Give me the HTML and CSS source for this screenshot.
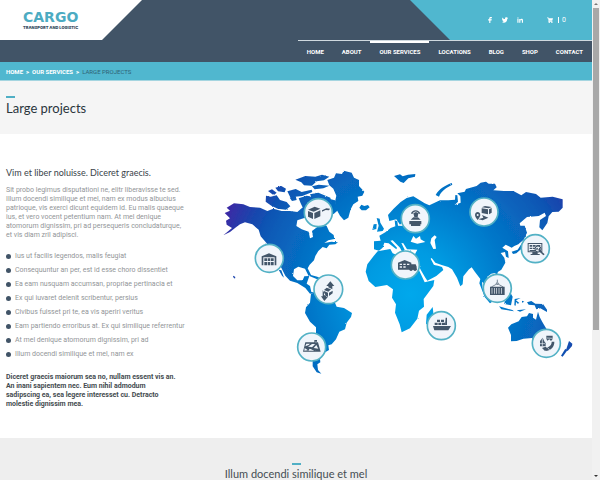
FILE: index.html
```html
<!DOCTYPE html>
<html lang="en">
<head>
<meta charset="utf-8">
<title>Large projects</title>
<link rel="stylesheet" href="styles.css">
</head>
<body>
<div class="page">
  <header class="header">
    <div class="topbar">
      <a class="logo" href="#"><span class="logo-name">CARGO</span><span class="logo-sub">TRANSPORT AND LOGISTIC</span></a>
      <div class="tools">
        <a href="#" aria-label="Facebook"><svg viewBox="0 0 16 16"><path d="M6 16V9H3V6h3V4c0-3 2-4 4-4h3v3h-2c-1 0-2 0-2 1v2h4l-1 3H9v7z"/></svg></a>
        <a href="#" aria-label="Twitter"><svg viewBox="0 0 16 16"><path d="M16 3l-2 2c0 6-4 10-9 10-2 0-4-1-5-2 2 0 4 0 5-1-2 0-3-1-3-2h1C1 9 0 8 0 6h2C0 5 0 3 1 1c2 3 4 4 7 4 0-5 4-5 6-3l2-1-1 2z"/></svg></a>
        <a href="#" aria-label="LinkedIn"><svg viewBox="0 0 16 16"><path d="M1 5h3v10H1zM1 1h3v3H1zM6 5h3v2c1-3 7-3 7 2v6h-3v-5c0-3-4-3-4 0v5H6z"/></svg></a>
        <a class="cart" href="#" aria-label="Cart"><svg viewBox="0 0 16 16"><path d="M0 1h4l1 2h11l-2 7H6v1h8v2H4V9L3 3H0z"/><circle cx="6" cy="14" r="2"/><circle cx="13" cy="14" r="2"/></svg><span class="count">0</span></a>
      </div>
    </div>
    <nav class="nav">
      <a href="#">HOME</a><a href="#">ABOUT</a><a class="active" href="#">OUR SERVICES</a><a href="#">LOCATIONS</a><a href="#">BLOG</a><a href="#">SHOP</a><a href="#">CONTACT</a>
    </nav>
  </header>
  <div class="crumbs"><a href="#">HOME</a><b>&gt;</b><a href="#">OUR SERVICES</a><b>&gt;</b><span>LARGE PROJECTS</span></div>
  <section class="title"><h1>Large projects</h1></section>
  <main class="main">
    <article class="copy">
      <h2>Vim et liber noluisse. Diceret graecis.</h2>
      <p>Sit probo legimus disputationi ne, elitr liberavisse te sed.<br>Illum docendi similique et mel, nam ex modus albucius<br>patrioque, vis exerci dicunt equidem id. Eu malis quaeque<br>ius, et vero vocent petentium nam. At mel denique<br>atomorum dignissim, pri ad persequeris concludaturque,<br>et vis diam zril adipisci.</p>
      <ul>
        <li>Ius ut facilis legendos, malis feugiat</li>
        <li>Consequuntur an per, est id esse choro dissentiet</li>
        <li>Ea eam nusquam accumsan, propriae pertinacia et</li>
        <li>Ex qui iuvaret delenit scribentur, persius</li>
        <li>Civibus fuisset pri te, ea vis aperiri veritus</li>
        <li>Eam partiendo erroribus at. Ex qui similique referrentur</li>
        <li>At mel denique atomorum dignissim, pri ad</li>
        <li>Illum docendi similique et mel, nam ex</li>
      </ul>
      <p class="strong">Diceret graecis maiorum sea no, nullam essent vis an.<br>An inani sapientem nec. Eum nihil admodum<br>sadipscing ea, sea legere interesset cu. Detracto<br>molestie dignissim mea.</p>
    </article>
    <svg class="map" viewBox="0 0 1110 660" role="img" aria-label="World map of services">
      <defs>
        <radialGradient id="sea" gradientUnits="userSpaceOnUse" cx="600" cy="400" r="600">
          <stop offset="0" stop-color="#00a8ec"/><stop offset=".22" stop-color="#009be2"/><stop offset=".5" stop-color="#0477c9"/><stop offset=".78" stop-color="#0a58b5"/><stop offset=".88" stop-color="#1a45ad"/><stop offset="1" stop-color="#3a2aa5"/>
        </radialGradient>
        <filter id="coast" x="-2%" y="-2%" width="104%" height="104%"><feTurbulence type="fractalNoise" baseFrequency=".2" numOctaves="2" seed="4"/><feDisplacementMap in="SourceGraphic" scale="5" xChannelSelector="R" yChannelSelector="G"/></filter>
      </defs>
      <g fill="url(#sea)" filter="url(#coast)">
        <path d="M44 156L60 149 50 140 72 127 100 130 120 138 150 140 172 150 190 143 215 150 240 150 262 153 275 142 290 132 330 150 285 170 262 178 259 195 275 205 296 212 300 232 309 228 306 210 322 198 338 188 350 195 358 212 371 222 373 234 355 238 343 246 364 242 384 244 376 250 358 251 350 262 338 258 325 270 316 285 312 298 299 311 293 322 303 342 296 345 285 323 265 317 252 325 249 345 262 358 278 358 283 346 298 345 292 362 290 368 300 375 304 393 320 395 300 398 286 381 262 366 240 359 226 344 214 320 204 302 185 275 170 247 152 226 146 206 127 190 105 184 90 190 78 199 60 213 40 223 66 201 50 191 48 179 60 172z"/>
        <path d="M206 326l10 18 6 6-8-22zM300 341l22 6 20 10-4 5-20-9-18-7z"/>
        <path d="M303 398L320 393 342 401 374 423 380 437 402 441 426 456 423 468 410 485 405 505 388 512 378 535 365 550 355 553 357 567 343 575 330 594 331 604 322 610 324 627 334 638 320 634 308 616 308 600 315 560 318 530 318 499 300 482 285 456 288 439 300 425z"/>
        <path d="M352 57L372 50 378 37 396 39 401 29 425 35 432 50 447 57 447 75 463 92 457 104 443 107 445 120 430 130 422 145 415 170 402 178 390 164 377 141 375 122 379 104 370 83 358 73z"/>
        <path d="M448 140l6-9 9 4 11-3 5 7-11 9h-13z"/>
        <path d="M256 56l30-11 30 2 20-6 22 6-16 11-22 3-14 13-24-1-8-9z"/>
        <path d="M196 80l18-5 14 8-4 11-20-3zM174 90l12-5 14 10-9 8zM168 104l14 3 18-4 10 14 20 6 11 13-13 10-25-3-19-9-17-12zM232 91l25-7 18 9 30-7 2 7-30 12-22 2-12 6zM239 110l18-5 3 12-14 3zM266 112l24-8 19 3 8-12 12 4-9 16-27 9 2 17-15 2-8-16zM306 76l20-5 32 3-18 8-26 3zM300 100l25-5 36 15 8 30-18-4-21-16-22-5zM357 113l18 5 7 31-12 11-9-18z"/>
        <path d="M552 45l18-5 8 6 16-5 22-2-1 8-20 5-14 14-10-4zM677 102c10-18 26-28 48-36l2 5c-20 10-34 20-40 36z"/>
        <path d="M492 265L492 241 512 239 508 224 526 214 542 201 556 196 554 178 562 181 564 194 590 195 603 180 590 164 578 183 570 191 559 175 538 180 534 162 550 144 572 123 590 111 610 106 644 127 658 133 690 118 715 118 735 116 736 102 742 103 744 122 734 132 752 125 751 106 742 97 764 92 768 84 800 75 812 65 828 62 836 68 855 68 860 79 850 88 882 90 910 90 934 103 948 93 978 99 992 110 1028 107 1058 115 1058 140 1046 152 1027 153 1016 166 1012 186 997 208 988 199 990 177 1008 165 1004 155 986 165 951 168 929 187 931 194 944 194 951 215 941 236 925 250 913 255 905 260 887 251 877 260 894 271 896 291 888 287 885 273 872 276 883 290 886 305 874 326 860 335 844 338 831 348 843 369 838 381 824 370 816 362 818 382 833 410 850 420 840 427 824 408 808 367 811 354 795 333 785 319 777 325 760 346 758 370 751 376 741 350 726 325 715 318 695 312 676 305 665 291 662 293 672 312 684 314 696 318 700 327 679 345 652 359 646 350 632 326 621 301 613 298 644 364 673 357 670 375 641 414 642 437 627 449 622 473 600 502 575 514 569 490 555 455 558 430 546 410 549 385 531 372 496 378 476 360 467 332 472 310 491 285 503 271 541 264 548 277 570 286 584 277 612 285 622 266 591 265 580 247 574 246 584 266 577 274 570 260 548 238 541 239 561 260 559 265 536 247 523 245 518 260 507 269z"/>
        <path d="M500 171l9 2 2 12 11 18-4 7-17 2 5-18zM491 190l9-1-1 15-12 3zM668 438l2 17-14 39-8-6 2-27z"/>
        <path d="M939 195l5 10 4 22-5 1zM944 234l12 6-10 8-7-5zM936 246l1 15-18 16-10 2-4-7 18-6zM858 328l6 1-3 15-5-5z"/>
        <path d="M865 343l8 6-1 15 7 5-8 4-7-13zM862 378l20-7 5 14-10 4zM898 389l10 18-5 26-20-4 2-15zM867 436l40 11 5 4-38-6zM914 414l18-3-14 7 10 8-5 2-5-6-1 12-4-1zM920 448l28-3-18 7zM936 419l7 3-7 3zM951 424l13-4 12 8 23 1 12 17 0 7-20-11-12 3-5-12-18-2z"/>
        <path d="M894 500L904 490 926 481 935 468 951 466 957 456 969 459 969 470 978 476 984 452 989 468 997 483 1009 503 1012 524 1000 560 986 560 974 546 966 531 940 533 920 540 903 541 903 522zM1077 540l10 8-1 7-13 15-5-3zM1066 563l5 6-13 18-5-3z"/>
        <path d="M70 344l6 4-1 5-6-5z"/>
      </g>
      <g fill="#fff"><path d="M602 242l8-17 8 8 12-8 2 10 14 8-24 5zM664 232l10-9 6 5-6 9 4 26-8 1-9-18z"/></g>
      <g class="badge">
        <circle cx="325" cy="155" r="42"/><circle cx="178" cy="292" r="42"/><circle cx="355" cy="385" r="43"/><circle cx="305" cy="558" r="42"/><circle cx="616" cy="173" r="42"/><circle cx="822" cy="153" r="42"/><circle cx="586" cy="312" r="42"/><circle cx="976" cy="263" r="42"/><circle cx="862" cy="382" r="42"/><circle cx="694" cy="494" r="42"/><circle cx="1009" cy="547" r="42"/>
      </g>
      <g class="glyph">
        <path d="M294 146l20-9 17 6-20 9zM294 150l15 6v18l-15-7zM313 156l18-8v18l-18 8zM336 148l13-6 11 1-3 5-10-1-11 5z"/>
        <path fill-rule="evenodd" d="M155 286l22-9 22 9v27h-5v-24h-34v24h-5zM163 292h8v8h-8zm10 0h8v8h-8zm10 0h8v8h-8zM163 303h8v10h-8zm10 0h8v10h-8zm10 0h8v10h-8z"/>
        <path d="M361 361l12 14h-6v10l-12-6v-4h-6zM342 387l8-7 13 5-8 7zM342 390l12 5v12l-12-5zM357 395l11-6v8l-11 8zM338 387v19h-5l10 14 11-13h-5z"/>
        <path fill-rule="evenodd" d="M286 544h38l8 28h-53zM289 548l-3 8 10-4 4-4zm17 1l-12 8 12 2 10-10zm13 3l-8 9 14 2zm-35 9l-1 8 11-1zm15 2l-4 6h23z"/><path d="M313 537h8v5h-6v8h-2zM300 557l18 12-4 2-18-12z"/>
        <path d="M603 158c2-14 25-14 28 0h-5c-3-9-15-9-18 0zM610 157l8-4 7 4-2 11h-10zM602 176l8-7h14l8 7zM598 180h36v10h-36zM603 188h28v7h-28z"/>
        <path d="M815 139l10-4 20 3-9 4zM815 142l19 3v15l-19-4zM837 145l8-4v14l-8 5zM809 173l11-3-4-8 19 8-17 8-12-3z"/><path fill-rule="evenodd" d="M795 162c0-12 16-12 16 0 0 5-5 11-8 15-4-5-8-10-8-15zM800 162a3 3 0 106 0 3 3 0 10-6 0"/>
        <path fill-rule="evenodd" d="M564 305l20-8 20 8v5h13l3 7v9H564zM569 308v4h7v-4zm11 0v4h7v-4zm11 0v4h7v-4zm-22 8v4h7v-4zm11 0v4h7v-4z"/><circle cx="603" cy="325" r="5"/><circle cx="615" cy="325" r="5"/>
        <path fill-rule="evenodd" d="M953 246h44v28h-44zM956 249v22h38v-22zM967 274h16v5h6v3h-27v-3h5z"/><path d="M959 252h8v5h-8zm10 0h8v5h-8zM959 260h8v4h-8zm10 0h7v4h-7zM979 252h12v3h-12zM959 267h16v3h-16z"/><circle cx="984" cy="264" r="9" fill="#edf4fa" stroke="#43566a" stroke-width="3"/><path d="M979 268v-8h3l5 7v-7h3v10h-3l-5-6v4zM989 272l3-3 12 11-4 3z"/>
        <path fill-rule="evenodd" d="M840 377h44v25h-44zM845 381v17h2v-17zm7 0v17h2v-17zm7 0v17h2v-17zm7 0v17h2v-17zm7 0v17h2v-17z"/><path fill="none" stroke="#43566a" stroke-width="2" d="M862 356v8l-4 3 4 4 4-4-3-3M844 378l18-10 18 10"/>
        <path d="M669 495h54l-8 13h-42zM674 485h9v7h-9zm11 0h9v7h-9zm11 0h9v7h-9zM681 476h9v7h-9zm12 0h9v7h-9zM707 470h4v22h-6z"/>
        <path d="M990 540l8-10 6 13 3 3v10h-17zM1009 524h19v10l-5 6-5-5-6 4-3-6zM1005 562c14-4 20-10 20-20h8c0 16-9 25-24 28zM996 561l11-4 8 8-10 5z"/><path stroke="#edf4fa" stroke-width="2" fill="none" d="M990 548h15m-8-16v24m13-25 18 1m-15 28 6 7"/>
      </g>
    </svg>
  </main>
  <section class="next"><h2>Illum docendi similique et mel</h2></section>
</div>
<div class="scroll" aria-hidden="true"><i class="up"></i><i class="thumb"></i><i class="down"></i></div>
</body>
</html>
```
FILE: styles.css
```css
* { box-sizing: border-box; }
body {
  margin: 0;
  height: 100vh;
  overflow: hidden;
  display: grid;
  grid-template-columns: 1fr 8px;
  font: 7px/9px Roboto, "Liberation Sans", sans-serif;
  color: #929598;
  background: #fff;
}
a { color: inherit; text-decoration: none; }
h1, h2, p, ul { margin: 0; padding: 0; font-weight: 400; }
.page { display: flex; flex-direction: column; height: 100vh; min-width: 0; }
.header { background: #415467; color: #fff; }
.topbar { display: flex; justify-content: space-between; height: 40px; }
.logo {
  width: 142px;
  padding: 9px 0 0 23px;
  background: #fff;
  clip-path: polygon(0 0, 100% 0, 102px 100%, 0 100%);
  display: flex;
  flex-direction: column;
}
.logo-name { color: #4cabc2; font-family: "DejaVu Sans", sans-serif; font-size: 14px; line-height: 16px; font-weight: 700; }
.logo-sub { color: #415467; font-family: Inter, sans-serif; font-size: 4px; line-height: 5px; font-weight: 900; }
.tools {
  width: 182px;
  padding-left: 77px;
  background: #50b7cf;
  clip-path: polygon(0 0, 100% 0, 100% 100%, 40px 100%);
  display: flex;
  align-items: center;
  gap: 9px;
}
.tools a { display: flex; align-items: center; }
.tools svg { width: 6px; height: 6px; fill: #fff; }
.tools .cart { margin-left: 15px; gap: 5px; }
.count { border-left: 1px solid #fff; padding-left: 3px; line-height: 6px; }
.nav {
  display: flex;
  width: max-content;
  margin-left: auto;
  height: 22px;
  border-top: 1px solid #cfd9df;
  font-weight: 700;
  font-size: 6px;
}
.nav a { padding: 6px 9px 0; }
.nav .active { box-shadow: inset 0 2px #fff; }
.crumbs {
  height: 19px;
  padding-left: 6px;
  display: flex;
  align-items: center;
  gap: 3px;
  background: #50b7cf;
  border-bottom: 1px solid #a5d5e0;
  color: #fff;
  font-weight: 700;
  font-size: 6px;
}
.crumbs span { color: #2f6376; font-weight: 400; }
.title { background: #f5f5f5; height: 53px; padding: 15px 6px 0; color: #2b363d; }
h1, h2 { font-family: Lato, sans-serif; }
h1 { font-size: 13px; line-height: 20px; }
h1::before, .next h2::before { content: ""; display: block; width: 9px; height: 2px; background: #50afc5; }
.main { display: grid; grid-template-columns: 204fr 370fr 12fr; padding: 27px 0 0 6px; height: 304px; align-items: start; }
.copy { white-space: nowrap; padding-top: 6px; }
.copy h2 { color: #39434a; font-size: 9px; line-height: 12px; margin-bottom: 7px; }
.copy p { line-height: 9px; }
.copy ul { list-style: none; margin: 9px 0 12px; }
.copy li { line-height: 14px; display: flex; align-items: center; gap: 4px; }
.copy li::before { content: ""; width: 5px; height: 5px; border-radius: 50%; background: #415467; }
.copy .strong { font-weight: 700; color: #444b50; }
.map { width: 100%; display: block; }
.badge circle { fill: #f0f5fb; stroke: #52b1c5; stroke-width: 5px; }
.glyph { fill: #43566a; }
.next { flex: 1; background: #eee; padding-top: 25px; text-align: center; color: #454d53; overflow: hidden; }
.next h2 { font-size: 11px; line-height: 18px; }
.next h2::before { margin: 0 auto; }
.scroll { background: #f1f1f1; display: flex; flex-direction: column; align-items: center; }
.up, .down { height: 8px; display: grid; place-items: center; }
.up::before, .down::before { content: ""; border: 2px solid transparent; border-top-width: 0; border-bottom-color: #777; }
.down::before { border: 2px solid transparent; border-bottom-width: 0; border-top-color: #333; }
.thumb { width: 6px; height: 67vh; background: #a8a8a8; }
.down { margin-top: auto; }
```
